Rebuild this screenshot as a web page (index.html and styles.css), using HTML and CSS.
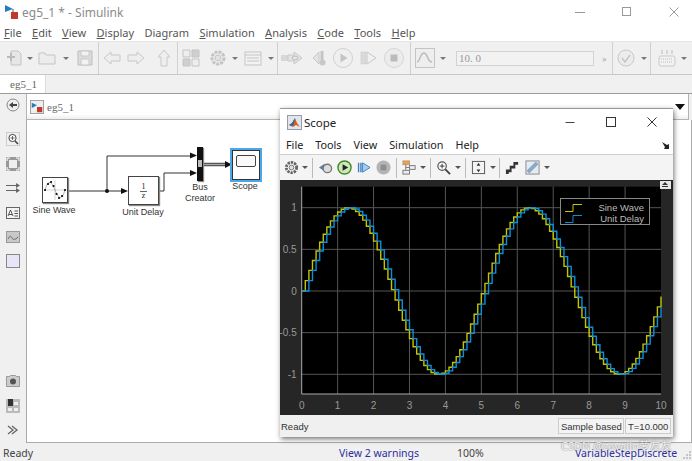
FILE: index.html
```html
<!DOCTYPE html>
<html lang="en">
  <head>
    <meta charset="UTF-8" />
    <meta name="viewport" content="width=device-width, initial-scale=1.0" />
    <title>eg5_1 * - Simulink</title>
    <link rel="stylesheet" href="styles.css">
  </head>
  <body>
    <div class="app">
      <div class="titlebar">
        <svg class="logo" width="16" height="16" viewBox="0 0 16 16"><path d="M1 1l8 4-8 3z" fill="#1f7fc0"/><path d="M9 5v3" stroke="#555"/><rect x="7" y="8" width="7" height="7" fill="#c0392b"/></svg>
        <span class="title-text">eg5_1 * - Simulink</span>
        <div class="win-btns">
          <svg width="10" height="10" viewBox="0 0 10 10"><path d="M0 5.500h10" stroke="#999"/></svg>
          <svg width="10" height="10" viewBox="0 0 10 10"><rect x=".5" y=".5" width="8" height="8" fill="none" stroke="#999"/></svg>
          <svg width="10" height="10" viewBox="0 0 10 10"><path d="M.5.5l9 9M9.500.5l-9 9" stroke="#999"/></svg>
        </div>
      </div>
      <div class="menubar">
        <span><u>F</u>ile</span><span><u>E</u>dit</span><span><u>V</u>iew</span><span><u>D</u>isplay</span><span>Dia<u>g</u>ram</span><span><u>S</u>imulation</span><span><u>A</u>nalysis</span><span><u>C</u>ode</span><span><u>T</u>ools</span><span><u>H</u>elp</span>
      </div>
      <div class="toolbar">
        <svg class="ico" viewBox="0 0 18 18"><path d="M5 2h7l3 3v11H5z" fill="#e6e6e6" stroke="#c4c4c4"/><path d="M1 8h8M5 4v8" stroke="#bbb" stroke-width="2"/></svg>
        <i class="caret ml3"></i>
        <svg class="ico ml5" viewBox="0 0 18 18"><path d="M1 4h6l1 2h9v9H1z" fill="#ececec" stroke="#c4c4c4"/></svg>
        <i class="caret ml7"></i>
        <svg class="ico ml7" viewBox="0 0 18 18"><path d="M2 2h14v14H2z" fill="#dcdcdc" stroke="#bdbdbd"/><path d="M5 2h8v5H5zM5 10h8v6H5z" fill="#f2f2f2" stroke="#c8c8c8"/></svg>
        <b class="sep ml4"></b>
        <svg class="ico ml4" viewBox="0 0 18 18"><path d="M1 9l7-6v3h9v6H8v3z" fill="#eee" stroke="#c8c8c8"/></svg>
        <svg class="ico ml6" viewBox="0 0 18 18"><path d="M17 9l-7-6v3H1v6h9v3z" fill="#eee" stroke="#c8c8c8"/></svg>
        <svg class="ico ml10" viewBox="0 0 18 18"><path d="M9 1l6 7h-3v9H6V8H3z" fill="#eee" stroke="#c8c8c8"/></svg>
        <b class="sep ml4"></b>
        <svg class="ico ml4" viewBox="0 0 18 18"><path d="M1 1h7v7H1zM10 10h7v7h-7z" fill="#eee" stroke="#c4c4c4"/><path d="M10 1h7v7h-7zM1 10h7v7H1z" fill="#cfcfcf" stroke="#c4c4c4"/></svg>
        <svg class="ico ml9" viewBox="0 0 18 18"><circle cx="9" cy="9" r="6" fill="none" stroke="#c4c4c4" stroke-width="3" stroke-dasharray="3 1"/><circle cx="9" cy="9" r="3" fill="#e2e2e2" stroke="#c4c4c4"/></svg>
        <i class="caret ml5"></i>
        <svg class="ico ml6" viewBox="0 0 18 18"><rect x="1" y="3" width="16" height="13" fill="#f2f2f2" stroke="#c4c4c4"/><path d="M1 6h16M3 9h12M3 12h12" stroke="#c4c4c4"/></svg>
        <i class="caret ml6"></i>
        <b class="sep ml3"></b>
        <svg class="ico loop ml3" viewBox="0 0 22 18"><rect x="0" y="6" width="8" height="6" fill="#d8d8d8"/><path d="M7 6h6V3l8 6-8 6v-3H7z" fill="#e4e4e4" stroke="#c8c8c8"/><ellipse cx="14" cy="9" rx="3" ry="2" fill="none" stroke="#bbb"/></svg>
        <svg class="ico ml9" viewBox="0 0 18 18"><path d="M1 9l6-6v12z" fill="#e4e4e4" stroke="#c8c8c8"/><path d="M10 2v9" stroke="#c4c4c4" stroke-width="3"/><circle cx="10.500" cy="13.500" r="3" fill="#c8c8c8"/></svg>
        <svg class="ico round ml3" viewBox="0 0 20 20"><circle cx="10" cy="10" r="9.500" fill="#efefef" stroke="#d0d0d0"/><path d="M7.500 5.500l7 4.500-7 4.500z" fill="#c4c4c4"/></svg>
        <svg class="ico ml6" viewBox="0 0 18 18"><path d="M2 3h2v12H2zM5 3h2v12H5z" fill="#e0e0e0" stroke="#c8c8c8" stroke-width=".6"/><path d="M8 3l9 6-9 6z" fill="#f0f0f0" stroke="#c8c8c8"/></svg>
        <svg class="ico round ml7" viewBox="0 0 20 20"><circle cx="10" cy="10" r="9.500" fill="#ececec" stroke="#d4d4d4"/><rect x="6.500" y="6.500" width="7" height="7" fill="#bbb"/></svg>
        <b class="sep ml6"></b>
        <svg class="ico wide ml4" viewBox="0 0 20 20"><rect x=".5" y=".5" width="19" height="19" fill="#eee" stroke="#c4c4c4"/><path d="M2 14c3 0 3-9 7-9s3 9 8 9" fill="none" stroke="#bbb" stroke-width="1.400"/></svg>
        <i class="caret ml5"></i>
        <span class="stoptime ml10">10. 0</span>
        <span class="more ml8">&raquo;</span>
        <b class="sep"></b>
        <svg class="ico ml4" viewBox="0 0 18 18"><circle cx="9" cy="9" r="8" fill="#ececec" stroke="#c8c8c8"/><path d="M5 9l3 4 5-7" fill="none" stroke="#c4c4c4" stroke-width="1.400"/></svg>
        <i class="caret ml6"></i>
        <b class="sep ml3"></b>
        <svg class="ico ml7" viewBox="0 0 18 18"><rect x="1" y="7" width="16" height="10" rx="2" fill="#f2f2f2" stroke="#c8c8c8"/><path d="M3 10h12M3 13h12" stroke="#bbb" stroke-dasharray="1 1"/><path d="M4 1v4M9 1v4M14 1v4" stroke="#bbb"/></svg>
        <i class="caret ml5"></i>
      </div>
      <div class="tabrow"><span class="tab">eg5_1</span></div>
      <div class="workspace">
        <div class="palette">
          <svg class="pal first" viewBox="0 0 14 14"><circle cx="7" cy="7" r="6" fill="#eee" stroke="#888"/><path d="M3 7l4-3v2h4v2H7v2z" fill="#444"/></svg>
          <svg class="pal gap-big" viewBox="0 0 14 14"><rect x=".5" y=".5" width="13" height="13" fill="none" stroke="#aaa" stroke-dasharray="1 1"/><circle cx="6.500" cy="6" r="3.600" fill="#fff" stroke="#444"/><path d="M9 9l3 3" stroke="#444" stroke-width="1.600"/><path d="M4.500 6h4M6.500 4v4" stroke="#444" stroke-width=".8"/></svg>
          <svg class="pal" viewBox="0 0 14 14"><rect width="14" height="14" fill="#999"/><rect x="3" y="3" width="8" height="8" fill="#eee"/><path d="M1 4V1h3M10 1h3v3M13 10v3h-3M4 13H1v-3" fill="none" stroke="#fff"/></svg>
          <svg class="pal" viewBox="0 0 14 14"><path d="M0 4.500h11M0 9.500h11" stroke="#666"/><path d="M10 2l4 2.500-4 2.500zM10 7l4 2.500-4 2.500z" fill="#666"/></svg>
          <svg class="pal" viewBox="0 0 14 14"><rect x=".5" y="1.500" width="13" height="11" fill="#f4f4f4" stroke="#666"/><path d="M2 10l2.500-6 2.500 6M3 8.500h3M8.500 5h3.500M8.500 7.500h3.500M8.500 10h3.500" fill="none" stroke="#444" stroke-width=".9"/></svg>
          <svg class="pal" viewBox="0 0 14 14"><rect x=".5" y="1.500" width="13" height="11" fill="#c8c8c8" stroke="#999"/><path d="M2 9c2-4 3-3 4-1s3 2 6-1" fill="none" stroke="#666"/></svg>
          <svg class="pal" viewBox="0 0 14 14"><rect x=".5" y=".5" width="13" height="13" fill="#e6e6f6" stroke="#888"/></svg>
          <svg class="pal push" viewBox="0 0 14 14"><path d="M.5 12.500v-10h3l1-1h5l1 1h3v10z" fill="#ccc" stroke="#999"/><circle cx="7" cy="7.500" r="3" fill="#555"/></svg>
          <svg class="pal" viewBox="0 0 14 14"><rect width="14" height="14" fill="#bbb"/><rect x="2" y="0" width="5" height="7" fill="#333"/><path d="M2 9h4v3H2zM8 3h4v3H8zM8 9h4v3H8z" fill="#eee"/></svg>
          <svg class="pal" viewBox="0 0 14 14"><path d="M2 3l5 4-5 4M6 3l5 4-5 4" fill="none" stroke="#666" stroke-width="1.300"/></svg>
        </div>
        <div class="main">
          <div class="address">
            <svg class="logo small" width="14" height="14" viewBox="0 0 16 16"><rect x=".5" y=".5" width="15" height="15" fill="#eee" stroke="#999"/><path d="M2 3l6 3-6 3z" fill="#1f7fc0"/><rect x="8" y="8" width="6" height="6" fill="#c0392b"/></svg>
            <span>eg5_1</span>
            <i class="addr-caret"></i>
          </div>
          <div class="canvas">
            <svg class="wires" width="260" height="120" viewBox="27 119 260 120">
              <g fill="none" stroke="#333">
                <path d="M68 190H124M108 190V155H193M159.500 190H165V172H193"/>
              </g>
              <path d="M204 162.500H227M204 164.500H227" stroke="#555" stroke-width="1.500" fill="none"/>
              <circle cx="108" cy="190" r="2" fill="#111"/>
              <path d="M122 187l7 3-7 3zM191 151.500l7 3-7 3zM191 169l7 3-7 3zM226 160l7 3.500-7 3.500z" fill="#111"/>
            </svg>
            <div class="block sine">
              <svg width="24" height="24" viewBox="0 0 24 24"><path d="M1 12h22M12 2v20" stroke="#bbb" stroke-width=".6"/><path d="M2 12C5 2 8 2 12 12s7 10 10 0" fill="none" stroke="#888" stroke-width=".7"/><path d="M2 12h.1M5 6h.1M8 4h.1M10.500 8h.1M13.500 16h.1M16 20h.1M19 18h.1M22 12h.1" stroke="#111" stroke-width="2.200" stroke-linecap="round"/></svg>
            </div>
            <span class="blabel sine-l">Sine Wave</span>
            <div class="block delay"><span class="frac">1</span><span class="frac bar">z</span></div>
            <span class="blabel delay-l">Unit Delay</span>
            <div class="bus"><i></i></div>
            <span class="blabel bus-l">Bus<br>Creator</span>
            <div class="block scope"><i></i></div>
            <span class="blabel scope-l">Scope</span>
          </div>
        </div>
      </div>
      <div class="statusbar">
        <span class="st-ready">Ready</span>
        <span class="st-warn">View 2 warnings</span>
        <span class="st-zoom">100%</span>
        <span class="st-solver">VariableStepDiscrete</span>
        <svg class="grip" width="8" height="8" viewBox="0 0 8 8"><path d="M6 0h2v2H6zM3 3h2v2H3zM6 3h2v2H6zM0 6h2v2H0zM3 6h2v2H3zM6 6h2v2H6z" fill="#c4c4c4"/></svg>
      </div>
    </div>

    <div class="scope-win">
      <div class="sc-title">
        <svg width="15" height="15" viewBox="0 0 15 15"><rect x=".5" y=".5" width="14" height="14" fill="#dfe6ee" stroke="#99a"/><path d="M2 10l3-2 3-5 2 5 3 4-4-2-3 2z" fill="#d9601a"/><path d="M2 10l3-2 3-5-1 6-2 2z" fill="#2a66a8"/></svg>
        <span>Scope</span>
        <div class="sc-btns">
          <svg width="10" height="10" viewBox="0 0 10 10"><path d="M.5 5.500h9" stroke="#444"/></svg>
          <svg width="10" height="10" viewBox="0 0 10 10"><rect x=".5" y=".5" width="9" height="9" fill="none" stroke="#333"/></svg>
          <svg width="10" height="10" viewBox="0 0 10 10"><path d="M.5.5l9 9M9.500.5l-9 9" stroke="#333"/></svg>
        </div>
      </div>
      <div class="sc-menu">
        <span>File</span><span>Tools</span><span>View</span><span>Simulation</span><span>Help</span>
        <svg class="dock" width="7" height="7" viewBox="0 0 7 7"><path d="M0 0l5 3 2-1v5H2l1-2z" fill="#222"/></svg>
      </div>
      <div class="sc-tools">
        <svg class="sci" viewBox="0 0 16 16"><circle cx="8" cy="8" r="5.500" fill="none" stroke="#666" stroke-width="3" stroke-dasharray="2.500 1"/><circle cx="8" cy="8" r="2.500" fill="#ddd" stroke="#777"/></svg>
        <i class="caret dark ml3"></i>
        <b class="sep sc ml4"></b>
        <svg class="sci ml5" viewBox="0 0 16 16"><path d="M1 8l6-4v8z" fill="#5a7fa8"/><circle cx="10" cy="9" r="4.500" fill="#ddd" stroke="#777" stroke-width="1.400"/></svg>
        <svg class="sci ml4" viewBox="0 0 16 16"><circle cx="8" cy="8" r="7" fill="#cfe8b8" stroke="#3f8a2a" stroke-width="1.500"/><path d="M6 4.500l6 3.500-6 3.500z" fill="#222"/></svg>
        <svg class="sci ml4" viewBox="0 0 16 16"><path d="M2 3h1.500v10H2zM4.500 3H6v10H4.500z" fill="#3d7fc0"/><path d="M7 3l8 5-8 5z" fill="#a8cdee" stroke="#3d7fc0"/></svg>
        <svg class="sci ml5" viewBox="0 0 16 16"><circle cx="8" cy="8" r="7.500" fill="#b4b4b4"/><rect x="5" y="5" width="6" height="6" fill="#8e8e8e"/></svg>
        <b class="sep sc ml5"></b>
        <svg class="sci ml5" viewBox="0 0 16 16"><rect x="1" y="1" width="7" height="4" fill="#f0a040" stroke="#b97"/><rect x="8" y="6" width="6" height="4" fill="#eee" stroke="#777"/><rect x="1" y="11" width="7" height="4" fill="#eee" stroke="#777"/><path d="M4 5v6M8 8H4" stroke="#777"/></svg>
        <i class="caret dark ml3"></i>
        <b class="sep sc ml4"></b>
        <svg class="sci ml5" viewBox="0 0 16 16"><circle cx="6.500" cy="6.500" r="4.500" fill="#fff" stroke="#555" stroke-width="1.300"/><path d="M10 10l5 5" stroke="#444" stroke-width="2"/><path d="M4 6.500h5M6.500 4v5" stroke="#333"/></svg>
        <i class="caret dark ml4"></i>
        <b class="sep sc ml4"></b>
        <svg class="sci ml5" viewBox="0 0 16 16"><rect x="1.500" y="1.500" width="13" height="13" fill="#f4f4f4" stroke="#555"/><path d="M8 3l2 3H6zM8 13l2-3H6z" fill="#333"/></svg>
        <i class="caret dark ml4"></i>
        <b class="sep sc ml3"></b>
        <svg class="sci ml5" viewBox="0 0 16 16"><path d="M1 15V10h4V6h4V2h5v3h-3v4H7v4H4v2z" fill="#333"/></svg>
        <svg class="sci ml5" viewBox="0 0 16 16"><rect x="1" y="1" width="14" height="14" fill="#e4ebf2" stroke="#888"/><path d="M3 13L13 3" stroke="#8aa9c8" stroke-width="4"/></svg>
        <i class="caret dark ml4"></i>
      </div>
      <div class="sc-plot">
        <svg id="plot" width="393" height="235" viewBox="0 0 393 235"></svg>
        <div class="legend">
          <div class="leg-row"><svg width="17" height="8" viewBox="0 0 17 8"><path d="M0 7.500h8V.5h9" fill="none" stroke="#c8c800"/></svg><span>Sine Wave</span></div>
          <div class="leg-row"><svg width="17" height="8" viewBox="0 0 17 8"><path d="M0 7.500h8V.5h9" fill="none" stroke="#0a8fd8"/></svg><span>Unit Delay</span></div>
        </div>
        <div class="expand"><svg width="10" height="7" viewBox="0 0 10 7"><path d="M5 1l3 3H2zM2 5h6v1H2z" fill="#333"/></svg></div>
      </div>
      <div class="sc-status">
        <span class="sc-ready">Ready</span>
        <span class="sc-box based">Sample based</span>
        <span class="sc-box">T=10.000</span>
      </div>
    </div>

    <span class="watermark">CSDN @zavalin萝友友</span>
    <script src="plot.js"></script>
  </body>
</html>
```

FILE: styles.css
```css
* {
  box-sizing: border-box;
}
html, body {
  margin: 0;
  height: 100%;
  overflow: hidden;
}
body {
  width: 692px;
  height: 461px;
  position: relative;
  background-color: #f0f0f0;
  font-family: "Noto Sans", sans-serif;
}
.app {
  display: flex;
  flex-direction: column;
  height: 461px;
}
.titlebar {
  display: flex;
  align-items: center;
  height: 24px;
  padding-left: 4px;
  background: #fff;
}
.title-text {
  margin-left: 2px;
  font-size: 12px;
  color: #8a8a8a;
}
.win-btns {
  display: flex;
  gap: 37px;
  margin-left: auto;
  margin-right: 13px;
}
.menubar {
  display: flex;
  align-items: center;
  gap: 10.4px;
  height: 17px;
  padding-left: 4px;
  background: #fff;
  font-size: 11px;
  color: #555;
}
.toolbar {
  display: flex;
  align-items: center;
  height: 34px;
  padding-left: 6px;
  background: #f0f0f0;
  border-top: 1px solid #e6e6e6;
  border-bottom: 1px solid #c8c8c8;
}
.ico {
  width: 18px;
  height: 18px;
  flex: none;
}
.ico.wide, .ico.round {
  width: 20px;
  height: 20px;
}
.ico.loop {
  width: 22px;
}
.caret {
  flex: none;
  width: 0;
  height: 0;
  border-left: 3.5px solid transparent;
  border-right: 3.5px solid transparent;
  border-top: 3.5px solid #777;
}
.caret.dark {
  border-left-width: 3px;
  border-right-width: 3px;
  border-top-width: 3px;
  border-top-color: #555;
}
.sep {
  flex: none;
  width: 1px;
  height: 32px;
  background: #d0d0d0;
}
.sep.sc {
  height: 20px;
  background: #bbb;
}
.ml3 { margin-left: 3px; }
.ml4 { margin-left: 4px; }
.ml5 { margin-left: 5px; }
.ml6 { margin-left: 6px; }
.ml7 { margin-left: 7px; }
.ml8 { margin-left: 8px; }
.ml9 { margin-left: 9px; }
.ml10 { margin-left: 10px; }
.stoptime {
  flex: none;
  width: 138px;
  height: 15px;
  padding-left: 2px;
  border: 1px solid #d2d2d2;
  background: #f2f2f2;
  font: 11px/13px "Liberation Serif", serif;
  color: #999;
}
.more {
  width: 10px;
  font-size: 9px;
  color: #aaa;
}
.tabrow {
  height: 19px;
  background: #f0f0f0;
  border-bottom: 1px solid #9c9c9c;
}
.tab {
  display: block;
  width: 46px;
  height: 18px;
  padding-left: 10px;
  background: #fff;
  border-right: 1px solid #ddd;
  font: 11px/18px "Liberation Serif", serif;
  color: #666;
}
.workspace {
  display: flex;
  flex: 1;
  min-height: 0;
}
.palette {
  display: flex;
  flex-direction: column;
  align-items: center;
  gap: 10.4px;
  width: 26px;
  padding-bottom: 6px;
}
.pal {
  width: 14px;
  height: 14px;
  flex: none;
}
.pal.first {
  margin-top: 4px;
}
.pal.gap-big {
  margin-top: 10px;
}
.pal.push {
  margin-top: auto;
}
.main {
  display: flex;
  flex-direction: column;
  flex: 1;
  margin-right: 3px;
}
.address {
  display: flex;
  align-items: center;
  gap: 3px;
  height: 26px;
  padding-left: 3px;
  padding-right: 3px;
  background: linear-gradient(#fff, #fff 80%, #eee);
  border: 1px solid #b4b4b4;
  border-top: 0;
  font: 11px "Liberation Serif", serif;
  color: #666;
}
.addr-caret {
  margin-left: auto;
  width: 0;
  height: 0;
  border-left: 5px solid transparent;
  border-right: 5px solid transparent;
  border-top: 6px solid #111;
}
.canvas {
  flex: 1;
  position: relative;
  background: #fff;
  border: 1px solid #aaa;
  border-top: 0;
  margin-right: -3px;
}
.wires {
  position: absolute;
  left: -1px;
  top: 0;
}
.block {
  position: absolute;
  background: #fff;
  border: 1px solid #444;
  box-shadow: 1px 1px 1px #888;
}
.sine {
  left: 15px;
  top: 57px;
  width: 26px;
  height: 26px;
}
.sine svg {
  display: block;
}
.delay {
  left: 101px;
  top: 56px;
  width: 31px;
  height: 29px;
  padding-top: 6px;
  text-align: center;
}
.frac {
  display: block;
  font: 8px/8px "Liberation Serif", serif;
  color: #222;
}
.frac.bar {
  border-top: 1px solid #666;
  margin: 0 11px;
}
.scope {
  left: 205px;
  top: 30px;
  width: 28px;
  height: 30px;
  border: 1px solid #333;
  box-shadow: 0 0 0 2px #4aa8e8;
  padding: 4px 3px;
}
.scope i {
  display: block;
  height: 12px;
  background: #fafafa;
  border: 1px solid #444;
  border-radius: 2px;
}
.bus {
  position: absolute;
  left: 170px;
  top: 27px;
  width: 6px;
  height: 34px;
  background: #111;
  box-shadow: 1px 1px 1px #888;
}
.bus i {
  display: block;
  width: 4px;
  height: 7px;
  margin: 13px 1px 0;
  background: #bbb;
}
.blabel {
  position: absolute;
  transform: translateX(-50%);
  font: 9px/11px "Liberation Sans", sans-serif;
  color: #333;
  text-align: center;
  white-space: nowrap;
}
.sine-l { left: 27px; top: 85px; }
.delay-l { left: 116px; top: 87px; }
.bus-l { left: 173px; top: 62px; }
.scope-l { left: 218px; top: 61px; }
.statusbar {
  position: relative;
  height: 18px;
  background: #f0f0f0;
  font-size: 10.5px;
  line-height: 20px;
  color: #444;
}
.statusbar span {
  position: absolute;
  top: 0;
}
.st-ready { left: 3px; }
.st-warn { left: 339px; color: #2e2e9e; }
.st-zoom { left: 457px; }
.st-solver { left: 575px; color: #2e2e9e; }
.grip {
  position: absolute;
  right: 1px;
  bottom: 2px;
}
.scope-win {
  position: absolute;
  left: 280px;
  top: 108px;
  display: flex;
  flex-direction: column;
  width: 393px;
  height: 329px;
  background: #fff;
  border-top: 1px solid #999;
  box-shadow: 1px 2px 5px rgba(0, 0, 0, 0.55);
  font-family: "Noto Sans", sans-serif;
}
.sc-title {
  display: flex;
  align-items: center;
  gap: 2px;
  height: 26px;
  padding-left: 7px;
  font-size: 11.5px;
  color: #222;
}
.sc-btns {
  display: flex;
  gap: 31px;
  margin-left: auto;
  margin-right: 16px;
  align-items: center;
}
.sc-menu {
  position: relative;
  display: flex;
  align-items: center;
  gap: 12px;
  height: 20px;
  padding-left: 6px;
  font-size: 10.8px;
  color: #222;
  border-bottom: 1px solid #d0d0d0;
}
.dock {
  position: absolute;
  right: 4px;
  top: 7px;
}
.sc-tools {
  display: flex;
  align-items: center;
  height: 25px;
  padding-left: 4px;
  background: #f4f4f4;
}
.sci {
  width: 15px;
  height: 15px;
  flex: none;
}
.sc-plot {
  position: relative;
  height: 235px;
  background: #262626;
}
#plot {
  display: block;
}
.legend {
  position: absolute;
  left: 280px;
  top: 18px;
  width: 90px;
  height: 27px;
  padding: 3px 5px 0 4px;
  background: #000;
  border: 1px solid #888;
  font: 9.5px/11px "Liberation Sans", sans-serif;
  color: #bbb;
}
.leg-row {
  display: flex;
  align-items: center;
  justify-content: space-between;
}
.expand {
  position: absolute;
  right: 2px;
  top: 1px;
  width: 11px;
  height: 8px;
  background: #e8e8e8;
  line-height: 0;
}
.sc-status {
  display: flex;
  align-items: center;
  flex: 1;
  padding: 0 2px 0 1px;
  background: #f0f0f0;
  font: 9.5px "Liberation Sans", sans-serif;
  color: #333;
}
.sc-ready {
  margin-right: auto;
}
.sc-box {
  display: block;
  width: 46px;
  height: 16px;
  padding-left: 2px;
  line-height: 15px;
  margin-left: 1px;
  background: #f4f4f4;
  border: 1px solid #ccc;
  white-space: nowrap;
}
.sc-box.based {
  width: 66px;
}
.watermark {
  position: absolute;
  left: 561px;
  top: 437px;
  font-family: "Noto Sans", "Noto Sans CJK SC", sans-serif;
  font-size: 11px;
  color: rgba(255, 255, 255, 0.9);
  text-shadow: 0 0 1.5px rgba(70, 70, 70, 0.9);
  white-space: nowrap;
}
```

FILE: plot.js
```js
// Scope plot: sine wave sampled at 0.1 s and the same signal delayed by one sample
var svg = document.getElementById("plot");
var NS = "http://www.w3.org/2000/svg";

var x0 = 21.7, x10 = 381, top0 = 6.7, bottom = 214, yZero = 111, yUnit = 83.3;

function px(t) {
  return x0 + (t / 10) * (x10 - x0);
}
function py(v) {
  return yZero - v * yUnit;
}
function add(tag, attrs, text) {
  var el = document.createElementNS(NS, tag);
  for (var k in attrs) el.setAttribute(k, attrs[k]);
  if (text !== undefined) el.textContent = text;
  svg.appendChild(el);
}

add("rect", { x: x0, y: top0, width: x10 - x0, height: bottom - top0, fill: "#000" });

for (var i = 1; i < 10; i++) {
  add("path", { d: "M" + px(i) + " " + top0 + "V" + bottom, stroke: "#555", fill: "none" });
}
[1, 0.5, 0, -0.5, -1].forEach(function (v) {
  add("path", { d: "M" + x0 + " " + py(v) + "H" + x10, stroke: "#555", fill: "none" });
  add("text", { x: x0 - 5, y: py(v) + 3.5, fill: "#999", "font-size": 10, "text-anchor": "end", "font-family": "Liberation Sans" }, String(v));
});
for (var j = 0; j <= 10; j++) {
  add("text", { x: px(j), y: 229, fill: "#999", "font-size": 10, "text-anchor": "middle", "font-family": "Liberation Sans" }, String(j));
}
add("path", { d: "M" + x0 + " " + top0 + "V" + bottom + "H" + x10, stroke: "#aaa", fill: "none" });

function stairs(delay) {
  var d = "M" + px(0) + " " + py(0);
  for (var k = 1; k <= 100; k++) {
    var t = k / 10;
    var v = k - delay < 0 ? 0 : Math.sin(1.25 * (k - delay) / 10);
    d += "H" + px(t).toFixed(2) + "V" + py(v).toFixed(2);
  }
  return d;
}
add("path", { d: stairs(0), stroke: "#c4c400", "stroke-width": 1.4, fill: "none" });
add("path", { d: stairs(1), stroke: "#0a8fd8", "stroke-width": 1.4, fill: "none" });
```
